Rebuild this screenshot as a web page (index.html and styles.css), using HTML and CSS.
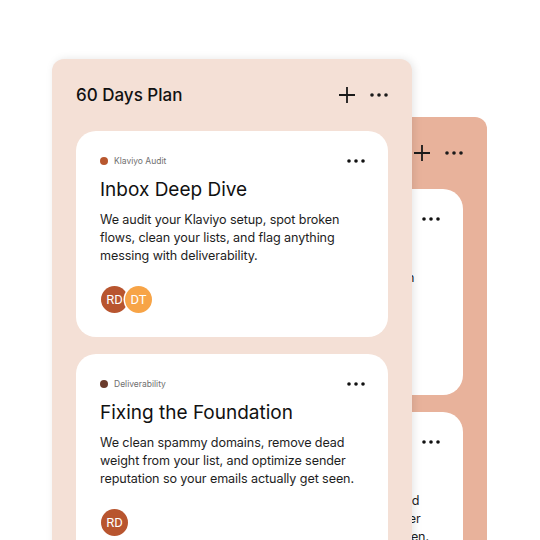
FILE: index.html
```html
<!DOCTYPE html>
<html>
<head>
<meta charset="utf-8">
<link rel="stylesheet" href="styles.css">
</head>
<body>
<div class="stage">
  <section class="column column-back">
    <header class="col-head">
      <h2 class="col-title">60 Days Plan</h2>
      <div class="col-actions">
        <svg class="icon-plus" width="18" height="18" viewBox="0 0 18 18"><path d="M9 1v16M1 9h16" stroke="#1a1a1a" stroke-width="1.8" fill="none"/></svg>
        <svg class="icon-dots" width="18" height="4" viewBox="0 0 18 4"><circle cx="2" cy="2" r="1.8" fill="#1a1a1a"/><circle cx="9" cy="2" r="1.8" fill="#1a1a1a"/><circle cx="16" cy="2" r="1.8" fill="#1a1a1a"/></svg>
      </div>
    </header>
    <div class="cards">
      <article class="card">
        <div class="card-meta">
          <span class="tag"><span class="tag-dot dot-audit"></span>Klaviyo Audit</span>
          <svg class="icon-dots" width="18" height="4" viewBox="0 0 18 4"><circle cx="2" cy="2" r="1.8" fill="#111"/><circle cx="9" cy="2" r="1.8" fill="#111"/><circle cx="16" cy="2" r="1.8" fill="#111"/></svg>
        </div>
        <h3 class="card-title">Inbox Deep Dive</h3>
        <p class="card-desc">We audit your Klaviyo setup, spot broken<br>flows, clean your lists, and flag anything<br>messing with deliverability.</p>
        <div class="avatars">
          <span class="avatar av-rd">RD</span><span class="avatar av-dt">DT</span>
        </div>
      </article>
      <article class="card">
        <div class="card-meta">
          <span class="tag"><span class="tag-dot dot-deliv"></span>Deliverability</span>
          <svg class="icon-dots" width="18" height="4" viewBox="0 0 18 4"><circle cx="2" cy="2" r="1.8" fill="#111"/><circle cx="9" cy="2" r="1.8" fill="#111"/><circle cx="16" cy="2" r="1.8" fill="#111"/></svg>
        </div>
        <h3 class="card-title">Fixing the Foundation</h3>
        <p class="card-desc">We clean spammy domains, remove dead<br>weight from your list, and optimize sender<br>reputation so your emails actually get seen.</p>
        <div class="avatars">
          <span class="avatar av-rd">RD</span>
        </div>
      </article>
    </div>
  </section>

  <section class="column column-front">
    <header class="col-head">
      <h2 class="col-title">60 Days Plan</h2>
      <div class="col-actions">
        <svg class="icon-plus" width="18" height="18" viewBox="0 0 18 18"><path d="M9 1v16M1 9h16" stroke="#1a1a1a" stroke-width="1.8" fill="none"/></svg>
        <svg class="icon-dots" width="18" height="4" viewBox="0 0 18 4"><circle cx="2" cy="2" r="1.8" fill="#1a1a1a"/><circle cx="9" cy="2" r="1.8" fill="#1a1a1a"/><circle cx="16" cy="2" r="1.8" fill="#1a1a1a"/></svg>
      </div>
    </header>
    <div class="cards">
      <article class="card">
        <div class="card-meta">
          <span class="tag"><span class="tag-dot dot-audit"></span>Klaviyo Audit</span>
          <svg class="icon-dots" width="18" height="4" viewBox="0 0 18 4"><circle cx="2" cy="2" r="1.8" fill="#111"/><circle cx="9" cy="2" r="1.8" fill="#111"/><circle cx="16" cy="2" r="1.8" fill="#111"/></svg>
        </div>
        <h3 class="card-title">Inbox Deep Dive</h3>
        <p class="card-desc">We audit your Klaviyo setup, spot broken<br>flows, clean your lists, and flag anything<br>messing with deliverability.</p>
        <div class="avatars">
          <span class="avatar av-rd">RD</span><span class="avatar av-dt">DT</span>
        </div>
      </article>
      <article class="card">
        <div class="card-meta">
          <span class="tag"><span class="tag-dot dot-deliv"></span>Deliverability</span>
          <svg class="icon-dots" width="18" height="4" viewBox="0 0 18 4"><circle cx="2" cy="2" r="1.8" fill="#111"/><circle cx="9" cy="2" r="1.8" fill="#111"/><circle cx="16" cy="2" r="1.8" fill="#111"/></svg>
        </div>
        <h3 class="card-title">Fixing the Foundation</h3>
        <p class="card-desc">We clean spammy domains, remove dead<br>weight from your list, and optimize sender<br>reputation so your emails actually get seen.</p>
        <div class="avatars">
          <span class="avatar av-rd">RD</span>
        </div>
      </article>
    </div>
  </section>
</div>
</body>
</html>
```

FILE: styles.css
```css
* { box-sizing: border-box; }
html, body {
  margin: 0;
  padding: 0;
  background: #ffffff;
  width: 540px;
  height: 540px;
  overflow: hidden;
  font-family: Inter, "Open Sans", sans-serif;
  color: #111;
}
.stage {
  position: relative;
  width: 540px;
  height: 540px;
  overflow: hidden;
}
.column {
  position: absolute;
  width: 360px;
  height: 560px;
  border-radius: 12px;
  padding: 24px 24px 0 24px;
}
.column-front {
  left: 52px;
  top: 59px;
  background: #f4e0d6;
  box-shadow: 2px 0 8px rgba(0, 0, 0, 0.10);
}
.column-back {
  left: 127px;
  top: 117px;
  background: #e8b29b;
}
.col-head {
  display: flex;
  align-items: center;
  justify-content: space-between;
  height: 24px;
  margin-bottom: 24px;
}
.col-title {
  margin: 0;
  font-size: 17px;
  font-weight: 500;
  line-height: 24px;
  color: #111;
}
.col-actions {
  display: flex;
  align-items: center;
  gap: 14px;
}
.icon-plus, .icon-dots { display: block; }
.cards {
  display: flex;
  flex-direction: column;
  gap: 17px;
}
.card {
  background: #ffffff;
  border-radius: 20px;
  padding: 24px 23px 24px 24px;
}
.card-meta {
  display: flex;
  align-items: center;
  justify-content: space-between;
  height: 12px;
}
.tag {
  display: flex;
  align-items: center;
  gap: 6px;
  font-size: 8.5px;
  color: #6f6f6f;
  line-height: 12px;
}
.tag-dot {
  width: 8px;
  height: 8px;
  border-radius: 50%;
  display: inline-block;
}
.dot-audit { background: #b8572e; }
.dot-deliv { background: #6b3b2c; }
.card-title {
  margin: 10px 0 0 0;
  font-size: 19px;
  font-weight: 400;
  line-height: 26px;
  color: #111;
}
.card-desc {
  margin: 8px 0 0 0;
  font-size: 12.6px;
  letter-spacing: -0.1px;
  line-height: 18px;
  color: #1e1e1e;
  white-space: nowrap;
}
.avatars {
  display: flex;
  margin-top: 21px;
}
.avatar {
  width: 27px;
  height: 27px;
  border-radius: 50%;
  display: flex;
  align-items: center;
  justify-content: center;
  color: #ffffff;
  font-size: 13px;
  font-family: Roboto, "Liberation Sans", sans-serif;
}
.av-rd { background: #b8552f; margin-left: 1px; }
.av-dt {
  background: #f7a447;
  margin-left: -3px;
  box-shadow: 0 0 0 1.5px #ffffff;
}
```
